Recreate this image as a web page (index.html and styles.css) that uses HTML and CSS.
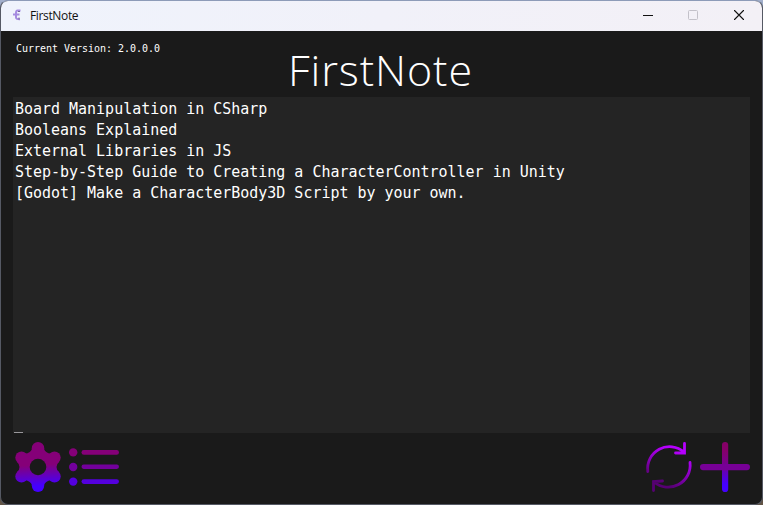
FILE: index.html
```html
<!DOCTYPE html>
<html lang="en">
<head>
<meta charset="utf-8">
<title>FirstNote</title>
<link rel="stylesheet" href="styles.css">
</head>
<body>
<main class="window">
  <header class="titlebar">
    <svg class="logo" width="10" height="12" viewBox="0 0 10 12">
      <path d="M8.500 1.500H5.500Q4 1.500 4 4V8.500Q4 10.300 8 10.200M1 5.500H7.500" fill="none" stroke="#a58be0" stroke-width="2"/>
      <path d="M6 2.500H8M7 8.500V10.500" stroke="#766796" stroke-width="1"/>
    </svg>
    <span class="caption">FirstNote</span>
    <svg class="controls" width="104" height="12" viewBox="0 0 104 12" fill="none">
      <path d="M0 6.500H10" stroke="#111"/>
      <rect x="45.500" y="1.500" width="9" height="9" rx="1" stroke="#c3c1c9"/>
      <path d="M91.500 1.500L100.500 10.500M100.500 1.500L91.500 10.500" stroke="#111" stroke-width="1.100" stroke-linecap="round"/>
    </svg>
  </header>
  <section class="content">
    <div class="heading">
      <p class="version">Current Version: 2.0.0.0</p>
      <h1>FirstNote</h1>
    </div>
    <ul class="notes">
      <li>Board Manipulation in CSharp</li>
      <li>Booleans Explained</li>
      <li>External Libraries in JS</li>
      <li>Step-by-Step Guide to Creating a CharacterController in Unity</li>
      <li>[Godot] Make a CharacterBody3D Script by your own.</li>
    </ul>
    <footer class="toolbar">
      <svg width="50" height="50" viewBox="0 0 50 50">
        <defs>
          <linearGradient id="warm" gradientUnits="userSpaceOnUse" x1="22" y1="0" x2="25" y2="50"><stop offset=".46" stop-color="#850078"/><stop offset=".88" stop-color="#4400ff"/></linearGradient>
          <mask id="hole"><path d="M0 0H50V50H0Z" fill="#fff"/><circle cx="25" cy="25" r="8.300" fill="#000"/></mask>
        </defs>
        <g fill="url(#warm)" mask="url(#hole)">
          <path d="M19 6Q19 9 15 11Q12 13 9 10L4 20Q6.500 22 6.500 25Q6.500 28 4 30L9 40Q12 37 15 39Q19 41 19 44H31Q31 41 35 39Q38 37 41 40L46 30Q43.500 28 43.500 25Q43.500 22 46 20L41 10Q38 13 35 11Q31 9 31 6Z"/>
          <circle cx="25" cy="6.200" r="6.200"/><circle cx="8.500" cy="15.600" r="6.200"/><circle cx="41.500" cy="15.600" r="6.200"/>
          <circle cx="8.500" cy="34.400" r="6.200"/><circle cx="41.500" cy="34.400" r="6.200"/><circle cx="25" cy="43.800" r="6.200"/>
        </g>
      </svg>
      <svg class="list-icon" width="50" height="50" viewBox="0 0 50 50">
        <g fill="#850078"><circle cx="4.200" cy="10.400" r="4.200"/><rect x="12.500" y="8" width="37.500" height="4.800" rx="2.400"/></g>
        <g fill="#73009c"><circle cx="4.200" cy="25" r="4.200"/><rect x="12.500" y="22.600" width="37.500" height="4.300" rx="2.150"/></g>
        <g fill="#5400de"><circle cx="4.200" cy="39.600" r="4.200"/><rect x="12.500" y="37.200" width="37.500" height="4.800" rx="2.400"/></g>
      </svg>
      <svg class="refresh-icon" width="50" height="50" viewBox="0 0 50 50" fill="none">
        <defs>
          <linearGradient id="upper" gradientUnits="userSpaceOnUse" x1="20" y1="5" x2="12" y2="31"><stop stop-color="#b600ff"/><stop offset="1" stop-color="#660086"/></linearGradient>
          <linearGradient id="lower" gradientUnits="userSpaceOnUse" x1="43" y1="20" x2="27" y2="46"><stop stop-color="#a900ee"/><stop offset="1" stop-color="#560073"/></linearGradient>
        </defs>
        <path d="M2.800 29.500A22 22 0 0 1 39 10M39.500 1.500V11H30.500" stroke="url(#upper)" stroke-width="2.800" stroke-linecap="round"/>
        <path d="M45 20.500A22 22 0 0 1 9 40M8.500 48.500V39.500L17.500 39" stroke="url(#lower)" stroke-width="2.800" stroke-linecap="round"/>
      </svg>
      <svg width="50" height="50" viewBox="0 0 50 50">
        <defs><linearGradient id="plus" x1="0" y1="0" x2="0" y2="1"><stop offset=".15" stop-color="#850068"/><stop offset=".45" stop-color="#75008f"/><stop offset=".85" stop-color="#4400ff"/></linearGradient></defs>
        <rect x="22" width="6.200" height="50" rx="3.100" fill="url(#plus)"/>
        <rect y="22" width="50" height="6.200" rx="3.100" fill="#770096"/>
      </svg>
    </footer>
  </section>
</main>
</body>
</html>
```
FILE: styles.css
```css
* { box-sizing: border-box; }
body {
  margin: 0;
  padding: 0;
  height: 505px;
  overflow: hidden;
  background: linear-gradient(#a3b0cc 0, #8794b3 30px, #536d92 180px, #4d4b50 230px, #48463a 400px, #625446 505px);
}
.window {
  display: flex;
  flex-direction: column;
  width: 763px;
  height: 505px;
  border: 1px solid #555964;
  border-top-color: #8d9bb8;
  border-radius: 8px;
  overflow: hidden;
  background: #1a1a1a;
}
.titlebar {
  display: flex;
  align-items: center;
  height: 30px;
  flex: none;
  padding: 0 15px 2px 11px;
  background: linear-gradient(90deg, #eff3fc, #f1f1f9 50%, #f3f0f6);
}
.caption {
  margin-left: 8px;
  font: 12px "Open Sans", sans-serif;
  letter-spacing: -.35px;
  color: #111;
}
.controls { margin-left: auto; }
.content {
  display: flex;
  flex-direction: column;
  flex: 1;
  padding: 0 12px;
  color: #fff;
}
.heading {
  display: grid;
  grid-template-columns: 1fr auto 1fr;
  height: 66px;
}
.version {
  margin: 11px 0 0 3px;
  white-space: nowrap;
  font: 9.970px/13px "DejaVu Sans Mono", monospace;
}
h1 {
  margin: 10px 2px 0 0;
  font: 300 43px/58px "Open Sans", sans-serif;
  letter-spacing: .9px;
}
.notes {
  position: relative;
  height: 336px;
  flex: none;
  margin: 0;
  padding: 2px;
  list-style: none;
  background: #242424;
  font: 14.970px/21px "DejaVu Sans Mono", monospace;
}
.notes::after {
  content: "";
  position: absolute;
  left: 1px;
  bottom: 0;
  width: 9px;
  height: 1px;
  background: #99979b;
}
.toolbar {
  display: flex;
  margin-top: 9px;
}
.list-icon { margin-left: 6px; }
.refresh-icon { margin: 0 5px 0 auto; }
```
